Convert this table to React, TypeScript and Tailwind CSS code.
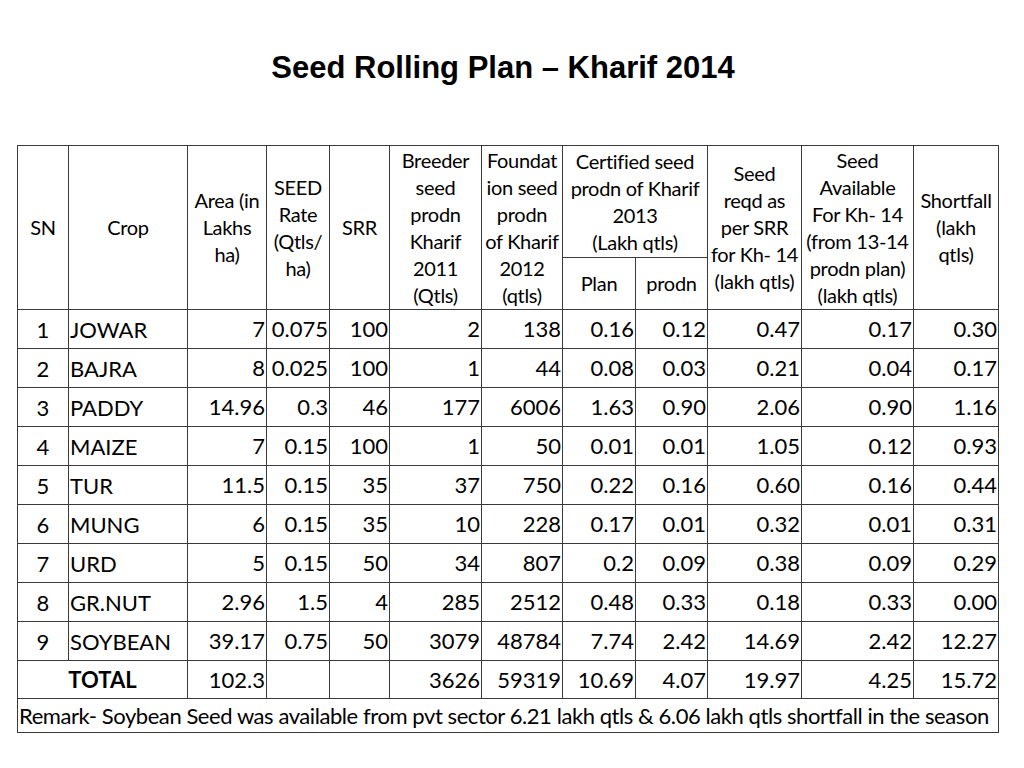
const rows = [
  ['1', 'JOWAR', '7', '0.075', '100', '2', '138', '0.16', '0.12', '0.47', '0.17', '0.30'],
  ['2', 'BAJRA', '8', '0.025', '100', '1', '44', '0.08', '0.03', '0.21', '0.04', '0.17'],
  ['3', 'PADDY', '14.96', '0.3', '46', '177', '6006', '1.63', '0.90', '2.06', '0.90', '1.16'],
  ['4', 'MAIZE', '7', '0.15', '100', '1', '50', '0.01', '0.01', '1.05', '0.12', '0.93'],
  ['5', 'TUR', '11.5', '0.15', '35', '37', '750', '0.22', '0.16', '0.60', '0.16', '0.44'],
  ['6', 'MUNG', '6', '0.15', '35', '10', '228', '0.17', '0.01', '0.32', '0.01', '0.31'],
  ['7', 'URD', '5', '0.15', '50', '34', '807', '0.2', '0.09', '0.38', '0.09', '0.29'],
  ['8', 'GR.NUT', '2.96', '1.5', '4', '285', '2512', '0.48', '0.33', '0.18', '0.33', '0.00'],
  ['9', 'SOYBEAN', '39.17', '0.75', '50', '3079', '48784', '7.74', '2.42', '14.69', '2.42', '12.27']
]

const totals = ['102.3', '', '', '3626', '59319', '10.69', '4.07', '19.97', '4.25', '15.72']

const widths = [51, 119, 79, 63, 60, 92, 81, 73, 72, 94, 112, 85]

const cell = 'border border-[#3a3a3a] p-0'
const head = `${cell} text-center align-middle text-[20px] leading-[27px] font-normal whitespace-nowrap tracking-[-0.3px]`
const num = `${cell} text-right pr-[1px] leading-none`

export default function App(): React.JSX.Element {
  return (
    <div className="w-[1024px] h-[768px] bg-white text-black overflow-hidden">
      <h1 className="h-[145px] pt-[50px] pr-[18px] text-center text-[31px] font-bold leading-[36px] font-['Liberation_Sans',Arial,sans-serif]">
        Seed Rolling Plan – Kharif 2014
      </h1>

      <table className="ml-[17px] w-[981px] table-fixed border-collapse font-['Lato',sans-serif] text-[22px]">
        <colgroup>
          {widths.map((w, i) => (
            <col key={i} style={{ width: w }} />
          ))}
        </colgroup>
        <thead>
          <tr className="h-[112px]">
            <th rowSpan={2} className={head}>SN</th>
            <th rowSpan={2} className={head}>Crop</th>
            <th rowSpan={2} className={head}>
              Area (in<br />Lakhs<br />ha)
            </th>
            <th rowSpan={2} className={head}>
              SEED<br />Rate<br />(Qtls/<br />ha)
            </th>
            <th rowSpan={2} className={head}>SRR</th>
            <th rowSpan={2} className={head}>
              Breeder<br />seed<br />prodn<br />Kharif<br />2011<br />(Qtls)
            </th>
            <th rowSpan={2} className={head}>
              Foundat<br />ion seed<br />prodn<br />of Kharif<br />2012<br />(qtls)
            </th>
            <th colSpan={2} className={head}>
              Certified seed<br />prodn of Kharif<br />2013<br />(Lakh qtls)
            </th>
            <th rowSpan={2} className={head}>
              Seed<br />reqd as<br />per SRR<br />for Kh- 14<br />(lakh qtls)
            </th>
            <th rowSpan={2} className={head}>
              Seed<br />Available<br />For Kh- 14<br />(from 13-14<br />prodn plan)<br />(lakh qtls)
            </th>
            <th rowSpan={2} className={head}>
              Shortfall<br />(lakh<br />qtls)
            </th>
          </tr>
          <tr className="h-[52px]">
            <th className={head}>Plan</th>
            <th className={head}>prodn</th>
          </tr>
        </thead>
        <tbody>
          {rows.map((r) => (
            <tr key={r[0]} className="h-[39px]">
              <td className={`${cell} text-center`}>{r[0]}</td>
              <td className={`${cell} text-left pl-[1px]`}>{r[1]}</td>
              {r.slice(2).map((v, i) => (
                <td key={i} className={num}>
                  {v}
                </td>
              ))}
            </tr>
          ))}
          <tr className="h-[38px]">
            <td colSpan={2} className={`${cell} text-center font-bold`}>
              TOTAL
            </td>
            {totals.map((v, i) => (
              <td key={i} className={num}>
                {v}
              </td>
            ))}
          </tr>
          <tr className="h-[33px]">
            <td
              colSpan={12}
              className={`${cell} text-left pl-[1px] whitespace-nowrap tracking-[-0.43px]`}
            >
              Remark- Soybean Seed was available from pvt sector 6.21 lakh qtls &amp; 6.06 lakh qtls
              shortfall in the season
            </td>
          </tr>
        </tbody>
      </table>
    </div>
  )
}
